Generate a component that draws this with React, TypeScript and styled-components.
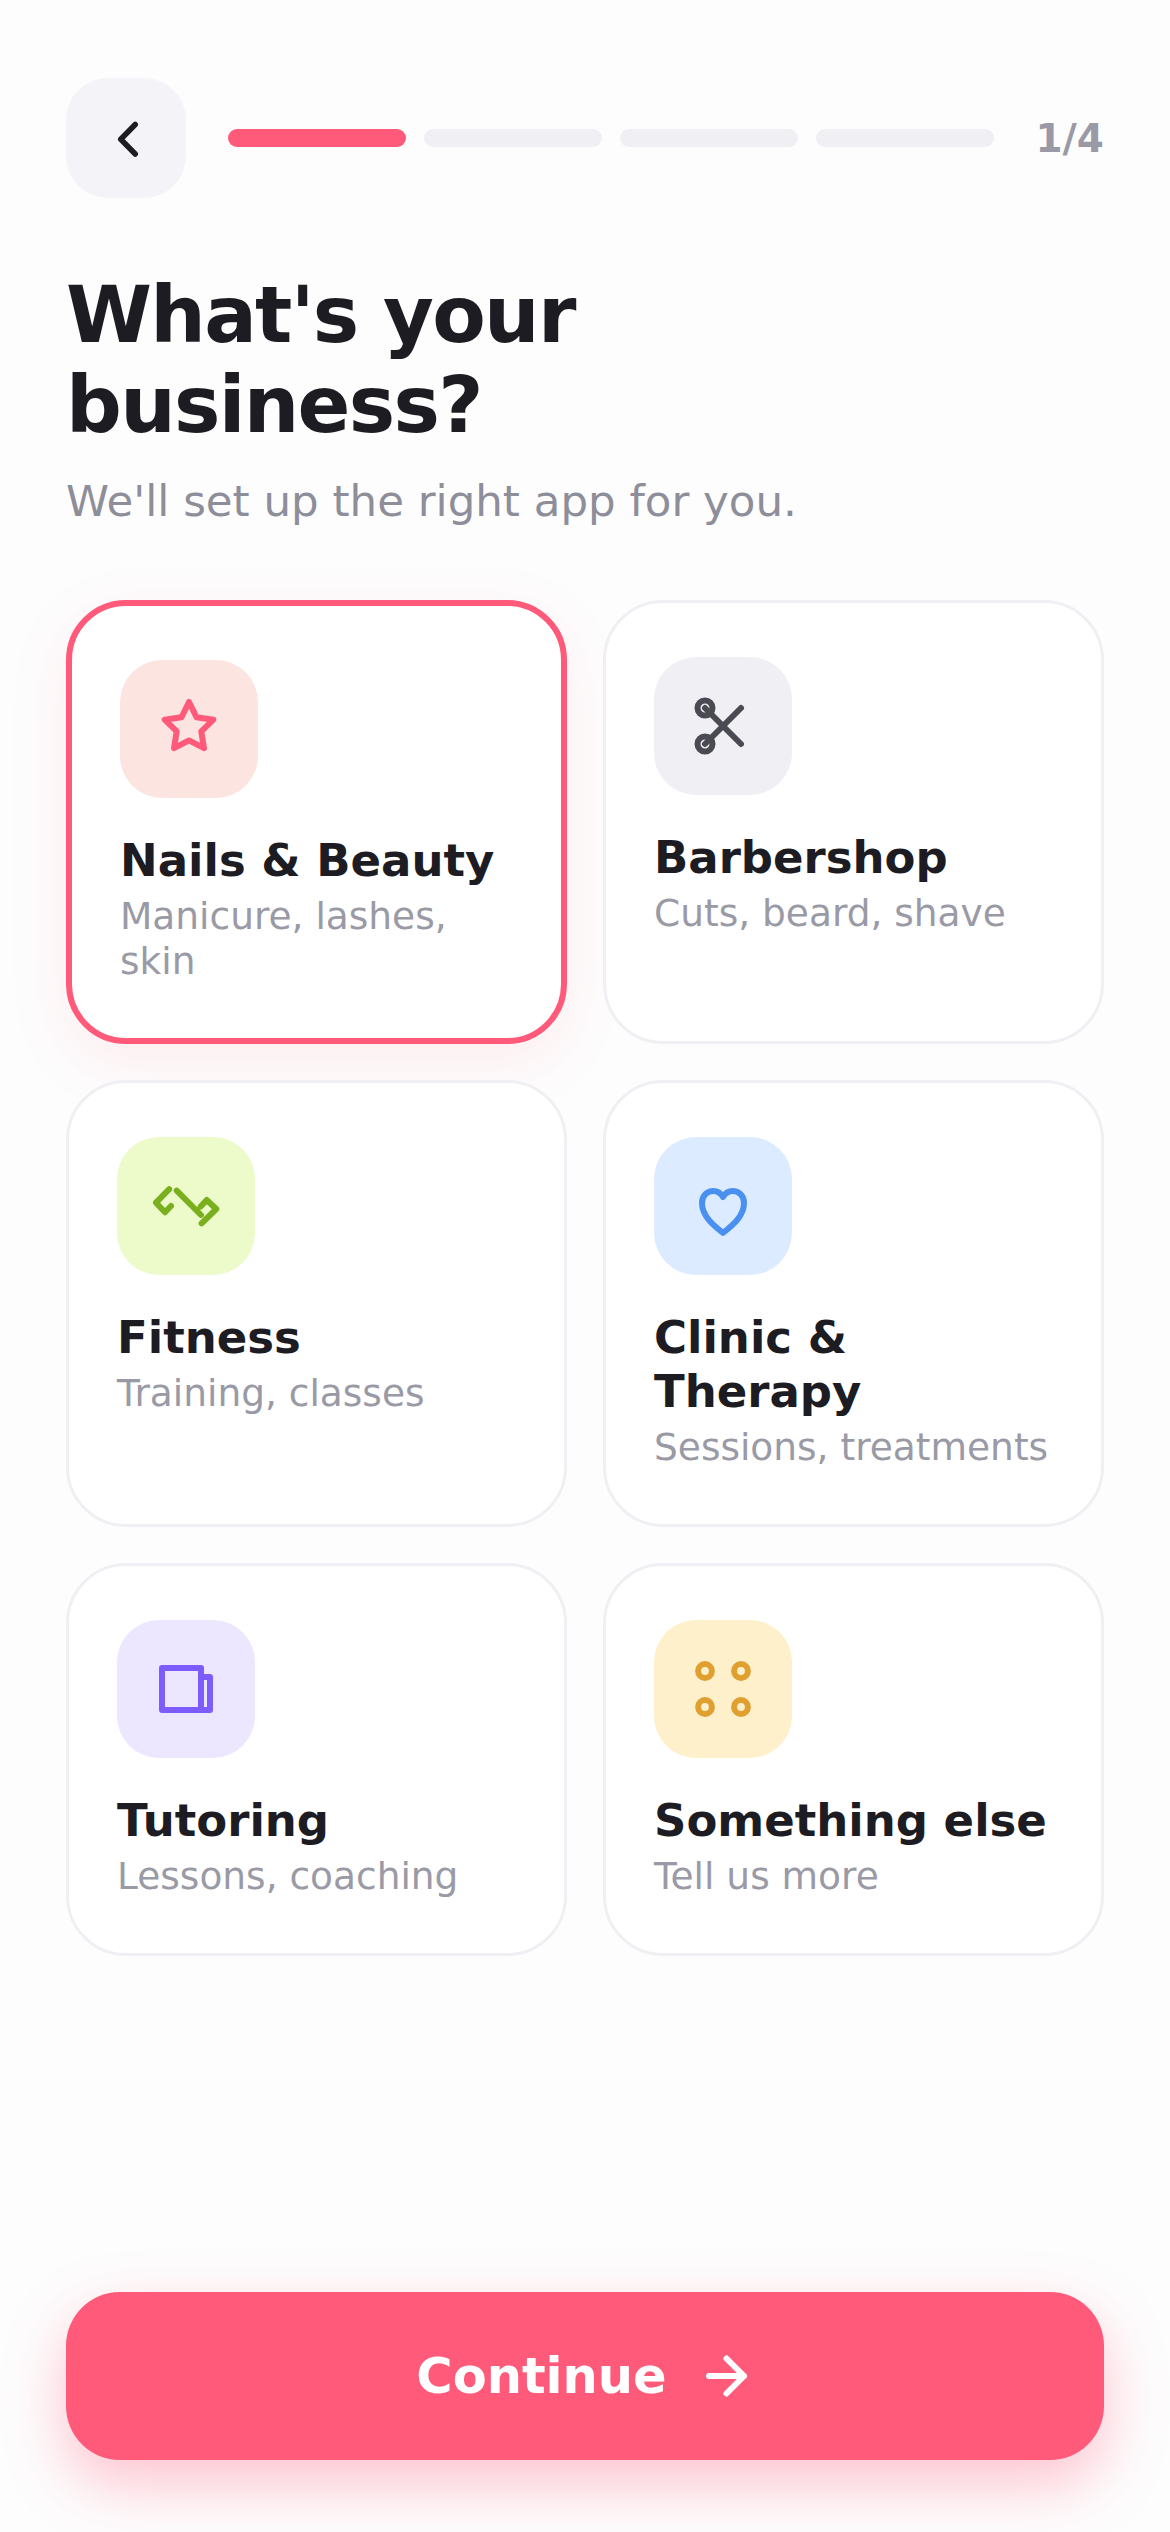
import React from "react"
import styled, { createGlobalStyle } from "styled-components"

const GlobalStyle = createGlobalStyle`
  html, body {
    margin: 0;
    padding: 0;
    background: #fdfdfd;
  }
  * {
    box-sizing: border-box;
  }
`

const Page = styled.div`
  width: 1170px;
  height: 2532px;
  padding: 78px 66px 72px;
  display: flex;
  flex-direction: column;
  font-family: "DejaVu Sans", sans-serif;
  color: #1c1c22;
  background: #fdfdfd;
  overflow: hidden;
`

const TopBar = styled.div`
  display: flex;
  align-items: center;
  gap: 42px;
`

const BackButton = styled.button`
  width: 120px;
  height: 120px;
  flex-shrink: 0;
  border: 0;
  padding: 0;
  border-radius: 42px;
  background: #f4f4f8;
  color: #1c1c22;
  display: flex;
  align-items: center;
  justify-content: center;
`

const Progress = styled.div`
  flex: 1;
  display: flex;
  gap: 18px;
`

const Segment = styled.div<{ $active?: boolean }>`
  flex: 1;
  height: 18px;
  border-radius: 9px;
  background: ${(p) => (p.$active ? "#ff5a7a" : "#f0f0f4")};
`

const StepCount = styled.div`
  font-size: 39px;
  font-weight: 700;
  color: #9a9aa6;
`

const Title = styled.h1`
  margin: 72px 0 0;
  font-size: 78px;
  line-height: 90px;
  letter-spacing: -1.7px;
  font-weight: 700;
  color: #1c1c22;
`

const Subtitle = styled.p`
  margin: 21px 0 0;
  font-size: 43.5px;
  line-height: 60px;
  color: #8e8e9a;
`

const Grid = styled.div`
  margin-top: 69px;
  display: grid;
  grid-template-columns: 1fr 1fr;
  gap: 36px;
`

const Card = styled.div<{ $selected?: boolean }>`
  background: #fff;
  border-radius: 60px;
  border: ${(p) => (p.$selected ? "6px solid #ff5a7a" : "3px solid #f0f0f4")};
  padding: 54px 48px;
  box-shadow: ${(p) => (p.$selected ? "0 18px 60px rgba(255, 90, 122, 0.1)" : "none")};
`

const IconBox = styled.div<{ $bg: string; $fg: string }>`
  width: 138px;
  height: 138px;
  border-radius: 42px;
  background: ${(p) => p.$bg};
  color: ${(p) => p.$fg};
  display: flex;
  align-items: center;
  justify-content: center;
  margin-bottom: 36px;
`

const CardTitle = styled.div`
  font-size: 45px;
  line-height: 54px;
  font-weight: 700;
  color: #1c1c22;
`

const CardText = styled.div`
  margin-top: 6px;
  font-size: 37.5px;
  line-height: 45px;
  color: #9a9aa6;
`

const ContinueButton = styled.button`
  margin-top: auto;
  width: 100%;
  height: 168px;
  border: 0;
  border-radius: 54px;
  background: #ff5a7a;
  color: #fff;
  font-family: inherit;
  font-size: 49.5px;
  font-weight: 700;
  display: flex;
  align-items: center;
  justify-content: center;
  gap: 27px;
  box-shadow: 0 24px 60px rgba(255, 90, 122, 0.35);
`

const Glyph: React.FC<{ size?: number; width?: number; children: React.ReactNode }> = ({
  size = 72,
  width = 2,
  children,
}) => (
  <svg
    width={size}
    height={size}
    viewBox="0 0 24 24"
    fill="none"
    stroke="currentColor"
    strokeWidth={width}
    strokeLinecap="round"
    strokeLinejoin="round"
  >
    {children}
  </svg>
)

const cards = [
  {
    title: "Nails & Beauty",
    text: "Manicure, lashes, skin",
    bg: "#fce4e1",
    fg: "#ff5a7a",
    selected: true,
    icon: (
      <path d="M12 3l2.5 5.1 5.6.8-4 3.9.9 5.6-5-2.6-5 2.6.9-5.6-4-3.9 5.6-.8z" />
    ),
  },
  {
    title: "Barbershop",
    text: "Cuts, beard, shave",
    bg: "#f0f0f4",
    fg: "#4a4a52",
    icon: (
      <>
        <circle cx="6" cy="6" r="2.5" />
        <circle cx="6" cy="18" r="2.5" />
        <path d="M6 6l12 12M6 18L18 6" />
      </>
    ),
  },
  {
    title: "Fitness",
    text: "Training, classes",
    bg: "#edfbcb",
    fg: "#7ab01e",
    icon: (
      <path d="M6.4 6.4L2 10.9l3 3.2 2-2.1M8.9 6.9l8.1 8.1M16.9 12.2l2-2.2 3.2 3-4.9 4.8" />
    ),
  },
  {
    title: "Clinic & Therapy",
    text: "Sessions, treatments",
    bg: "#dcebff",
    fg: "#4a90f0",
    icon: (
      <path d="M12 21C9 18.5 5 15.5 5 11c0-2.5 1.8-4 3.8-4 1.4 0 2.5.8 3.2 2 .7-1.2 1.8-2 3.2-2 2 0 3.8 1.5 3.8 4 0 4.5-4 7.5-7 10z" />
    ),
  },
  {
    title: "Tutoring",
    text: "Lessons, coaching",
    bg: "#ece7ff",
    fg: "#7c5cfc",
    icon: <path d="M4 5h13v14H4zM17 8h3v11h-3" />,
  },
  {
    title: "Something else",
    text: "Tell us more",
    bg: "#fff0cc",
    fg: "#e0a030",
    icon: (
      <>
        <circle cx="6" cy="6" r="2.3" />
        <circle cx="18" cy="6" r="2.3" />
        <circle cx="6" cy="18" r="2.3" />
        <circle cx="18" cy="18" r="2.3" />
      </>
    ),
  },
]

export default function App() {
  return (
    <Page>
      <GlobalStyle />
      <TopBar>
        <BackButton aria-label="Back">
          <Glyph size={60} width={2.2}>
            <path d="M15.7 18.4l-5.8-5.9 5.8-5.9" />
          </Glyph>
        </BackButton>
        <Progress>
          <Segment $active />
          <Segment />
          <Segment />
          <Segment />
        </Progress>
        <StepCount>1/4</StepCount>
      </TopBar>

      <Title>
        What's your
        <br />
        business?
      </Title>
      <Subtitle>We'll set up the right app for you.</Subtitle>

      <Grid>
        {cards.map((card) => (
          <Card key={card.title} $selected={card.selected}>
            <IconBox $bg={card.bg} $fg={card.fg}>
              <Glyph>{card.icon}</Glyph>
            </IconBox>
            <CardTitle>{card.title}</CardTitle>
            <CardText>{card.text}</CardText>
          </Card>
        ))}
      </Grid>

      <ContinueButton>
        Continue
        <Glyph size={60} width={2.4}>
          <path d="M6 12h14M13 5l7 7-7 7" />
        </Glyph>
      </ContinueButton>
    </Page>
  )
}
